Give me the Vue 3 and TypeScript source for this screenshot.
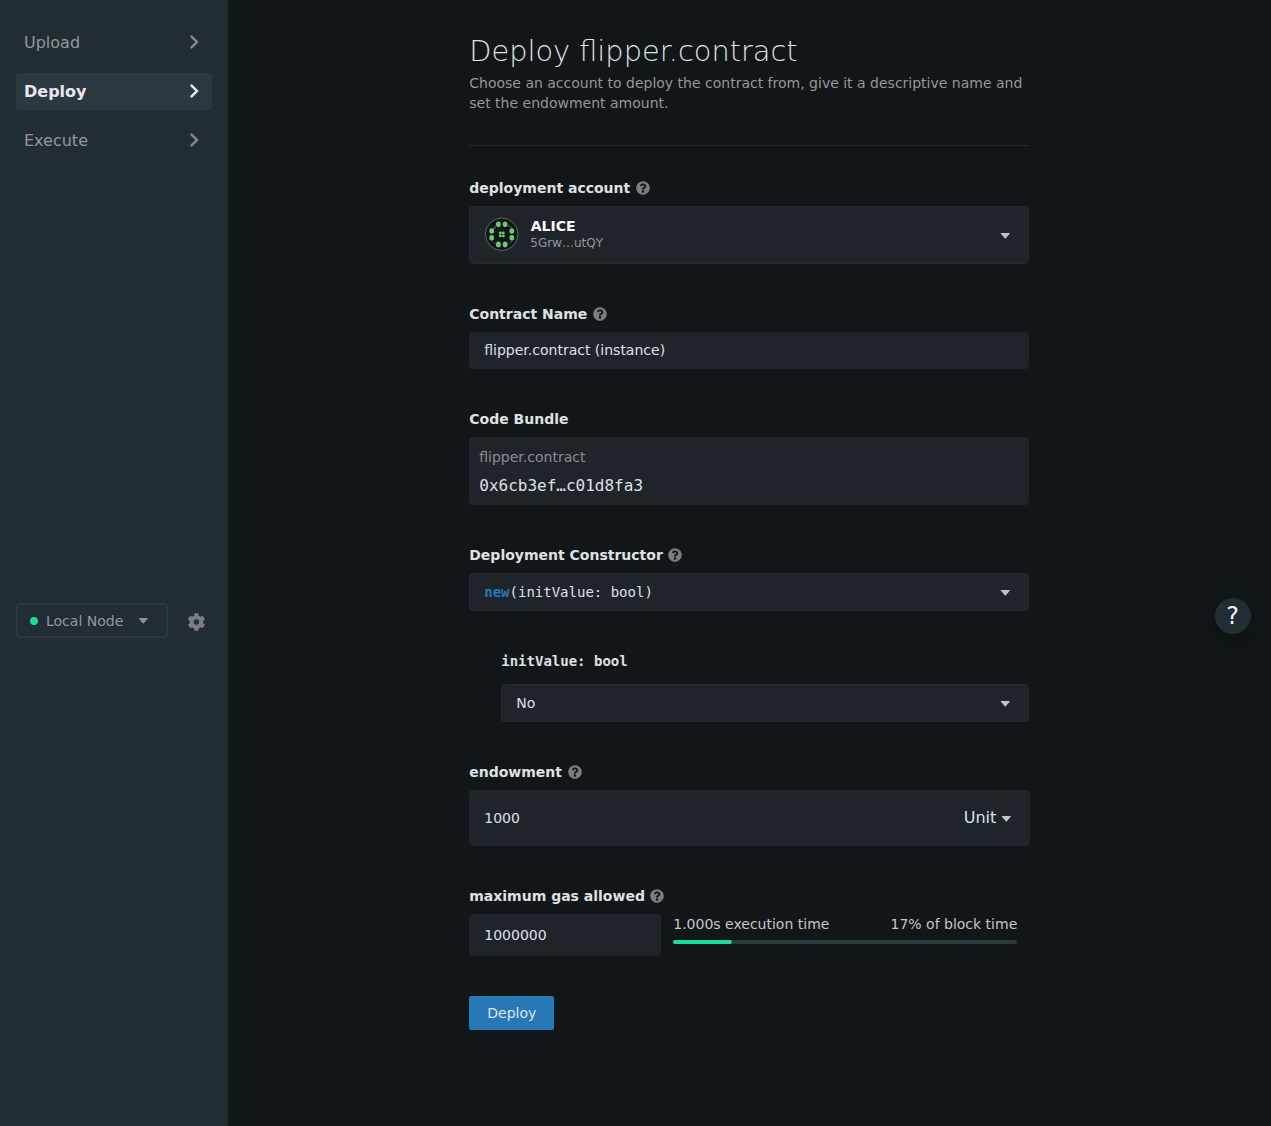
<script setup lang="ts">
const steps: { label: string; active: boolean }[] = [
  { label: 'Upload', active: false },
  { label: 'Deploy', active: true },
  { label: 'Execute', active: false },
]

const gasPercent = 17

const outerDots: [number, number][] = [
  [13.7, 7], [20.4, 7], [27.1, 13.7], [27.1, 20.4],
  [20.4, 27.1], [13.7, 27.1], [7, 20.4], [7, 13.7],
]
const innerDots: [number, number][] = [
  [15.6, 15.6], [18.6, 15.6], [15.6, 18.6], [18.6, 18.6],
]

const caretPath = 'M.7 .5Q.7 0 1.2 0h8.2q.5 0 .5.5L5.8 5.2q-.5.4-1 0z'
const helpPath =
  'M504 256c0 136.997-111.043 248-248 248S8 392.997 8 256C8 119.083 119.043 8 256 8s248 111.083 248 248zM262.655 90c-54.497 0-89.255 22.957-116.549 63.758-3.536 5.286-2.353 12.415 2.715 16.258l34.699 26.31c5.205 3.947 12.621 3.008 16.665-2.122 17.864-22.658 30.113-35.797 57.303-35.797 20.429 0 45.698 13.148 45.698 32.958 0 14.976-12.363 22.667-32.534 33.976C247.128 238.528 216 254.941 216 296v4c0 6.627 5.373 12 12 12h56c6.627 0 12-5.373 12-12v-1.333c0-28.462 83.186-29.647 83.186-106.667 0-58.002-60.165-102-116.531-102zM256 338c-25.365 0-46 20.635-46 46 0 25.364 20.635 46 46 46s46-20.636 46-46c0-25.365-20.635-46-46-46z'
const chevronPath =
  'M285.476 272.971L91.132 467.314c-9.373 9.373-24.569 9.373-33.941 0l-22.667-22.667c-9.357-9.357-9.375-24.522-.04-33.901L188.505 256 34.484 101.255c-9.335-9.379-9.317-24.544.04-33.901l22.667-22.667c9.373-9.373 24.569-9.373 33.941 0L285.475 239.03c9.373 9.372 9.373 24.568.001 33.941z'
const cogPath =
  'M487.4 315.7l-42.6-24.6c4.3-23.2 4.3-47 0-70.2l42.6-24.6c4.9-2.8 7.1-8.6 5.5-14-11.1-35.6-30-67.8-54.7-94.6-3.8-4.1-10-5.1-14.8-2.3L380.8 110c-17.9-15.4-38.5-27.3-60.8-35.1V25.8c0-5.6-3.9-10.5-9.4-11.7-36.7-8.2-74.3-7.8-109.2 0-5.5 1.2-9.4 6.1-9.4 11.7V75c-22.2 7.9-42.8 19.8-60.8 35.1L88.7 85.5c-4.9-2.8-11-1.9-14.8 2.3-24.7 26.7-43.6 58.9-54.7 94.6-1.7 5.4.6 11.2 5.5 14L67.3 221c-4.3 23.2-4.3 47 0 70.2l-42.6 24.6c-4.9 2.8-7.1 8.6-5.5 14 11.1 35.6 30 67.8 54.7 94.6 3.8 4.1 10 5.1 14.8 2.3l42.6-24.6c17.9 15.4 38.5 27.3 60.8 35.1v49.2c0 5.6 3.9 10.5 9.4 11.7 36.7 8.2 74.3 7.8 109.2 0 5.5-1.2 9.4-6.1 9.4-11.7v-49.2c22.2-7.9 42.8-19.8 60.8-35.1l42.6 24.6c4.9 2.8 11 1.9 14.8-2.3 24.7-26.7 43.6-58.9 54.7-94.6 1.5-5.5-.7-11.3-5.6-14.1zM256 336c-44.1 0-80-35.9-80-80s35.9-80 80-80 80 35.9 80 80-35.9 80-80 80z'
</script>

<template>
  <div class="app">
    <aside class="sidebar">
      <nav class="nav">
        <a v-for="step in steps" :key="step.label" class="nav-item" :class="{ active: step.active }">
          <span>{{ step.label }}</span>
          <svg class="chevron" viewBox="0 0 320 512"><path :d="chevronPath" /></svg>
        </a>
      </nav>
      <div class="network">
        <div class="node-select">
          <span class="status"></span>
          <span class="node-name">Local Node</span>
          <svg class="caret" viewBox="0 0 10 6"><path :d="caretPath" /></svg>
        </div>
        <svg class="cog" viewBox="0 0 512 512"><path :d="cogPath" /></svg>
      </div>
    </aside>

    <main class="main">
      <header class="header">
        <h1>Deploy flipper.contract</h1>
        <p>Choose an account to deploy the contract from, give it a descriptive name and set the endowment amount.</p>
      </header>

      <section class="group account">
        <label>deployment account<svg class="help" viewBox="0 0 512 512"><path :d="helpPath" /></svg></label>
        <div class="field bordered">
          <svg class="identicon" viewBox="0 0 34 34">
            <circle class="ring" cx="16.7" cy="17.3" r="16.3" />
            <g transform="translate(-0.3 0.3)">
              <path class="shade" d="M9.2 9.2l2-2.2v4.6h-4zM23.2 7l4.4 3.3v1.2l-4.4-2.2zM7.2 24l4 1.6v1.7zM27 22.7v2.6l-3.6 1.2z" />
              <ellipse v-for="(dot, i) in outerDots" :key="'o' + i" :cx="dot[0]" :cy="dot[1]" rx="2.4" ry="2.8" />
              <circle v-for="(dot, i) in innerDots" :key="'i' + i" :cx="dot[0]" :cy="dot[1]" r="1.45" />
            </g>
          </svg>
          <div class="identity">
            <strong>ALICE</strong>
            <span>5Grw…utQY</span>
          </div>
          <svg class="caret" viewBox="0 0 10 6"><path :d="caretPath" /></svg>
        </div>
      </section>

      <section class="group name">
        <label>Contract Name<svg class="help" viewBox="0 0 512 512"><path :d="helpPath" /></svg></label>
        <div class="field">flipper.contract (instance)</div>
      </section>

      <section class="group bundle">
        <label>Code Bundle</label>
        <div class="field">
          <span class="bundle-name">flipper.contract</span>
          <span class="bundle-hash">0x6cb3ef…c01d8fa3</span>
        </div>
      </section>

      <section class="group constructor">
        <label>Deployment Constructor<svg class="help" viewBox="0 0 512 512"><path :d="helpPath" /></svg></label>
        <div class="field bordered mono">
          <span><b>new</b>(initValue: bool)</span>
          <svg class="caret" viewBox="0 0 10 6"><path :d="caretPath" /></svg>
        </div>
      </section>

      <section class="group param">
        <label class="mono">initValue: bool</label>
        <div class="field bordered">
          <span>No</span>
          <svg class="caret" viewBox="0 0 10 6"><path :d="caretPath" /></svg>
        </div>
      </section>

      <section class="group endowment">
        <label>endowment<svg class="help" viewBox="0 0 512 512"><path :d="helpPath" /></svg></label>
        <div class="field">
          <span>1000</span>
          <span class="unit">Unit<svg class="caret" viewBox="0 0 10 6"><path :d="caretPath" /></svg></span>
        </div>
      </section>

      <section class="group gas">
        <label>maximum gas allowed<svg class="help" viewBox="0 0 512 512"><path :d="helpPath" /></svg></label>
        <div class="gas-row">
          <div class="field">1000000</div>
          <div class="usage">
            <div class="usage-text"><span>1.000s execution time</span><span>{{ gasPercent }}% of block time</span></div>
            <div class="track"><div class="fill" :style="{ width: gasPercent + '%' }"></div></div>
          </div>
        </div>
      </section>

      <button class="deploy" type="button">Deploy</button>
    </main>

    <div class="support">?</div>
  </div>
</template>

<style>
body {
  background: #111619;
}
</style>

<style scoped>
* {
  box-sizing: border-box;
}
.app {
  display: flex;
  height: 1126px;
  overflow: hidden;
  background: #111619;
  color: #dfe1e4;
  font-family: "DejaVu Sans", sans-serif;
  font-size: 14px;
  line-height: 20px;
}
svg {
  display: block;
  flex: none;
  fill: currentColor;
}
.sidebar {
  flex: none;
  width: 228px;
  padding: 24px 16px;
  background: #222c33;
  color: #969799;
}
.nav {
  display: flex;
  flex-direction: column;
  gap: 12px;
}
.nav-item {
  display: flex;
  align-items: center;
  justify-content: space-between;
  height: 37px;
  padding: 0 13px 0 8px;
  border-radius: 4px;
  font-size: 16px;
}
.nav-item.active {
  background: #2c383f;
  color: #e7e8ec;
  font-weight: bold;
}
.chevron {
  width: 10px;
  height: 16px;
  margin-bottom: 1.5px;
  opacity: 0.85;
}
.chevron path {
  transform: translateX(12px);
}
.active .chevron {
  opacity: 1;
}
.network {
  display: flex;
  align-items: center;
  gap: 19px;
  margin-top: 444px;
}
.node-select {
  display: flex;
  align-items: center;
  width: 152px;
  height: 35px;
  padding: 0 18px 0 12px;
  border: 2px solid #2c383f;
  border-radius: 4px;
}
.status {
  width: 8px;
  height: 8px;
  border-radius: 50%;
  background: #19dc9b;
}
.node-name {
  margin-left: 8px;
}
.caret {
  width: 10px;
  height: 6px;
  margin: 1px 0 0 auto;
  color: #c1c3c6;
}
.node-select .caret {
  color: #8f9094;
}
.cog {
  width: 18px;
  height: 18px;
  margin-top: 3px;
  color: #7b7d82;
}
.cog path {
  transform: translateX(12px);
}
.main {
  width: 560px;
  margin-left: 241.25px;
}
.header {
  height: 146px;
  padding-top: 33px;
  border-bottom: 1px solid #20272c;
}
h1 {
  margin: 0;
  font-size: 28.8px;
  font-weight: 200;
  line-height: 37px;
}
p {
  margin: 3px 0 0;
  color: #969799;
}
label {
  display: flex;
  align-items: center;
  height: 20px;
  font-weight: bold;
}
.help {
  width: 14px;
  height: 14px;
  margin-left: 5.5px;
  color: #7b7d82;
}
.field {
  display: flex;
  align-items: center;
  padding: 0 15px;
  border-radius: 4px;
  background: #1e2429;
}
.bordered {
  padding: 0 18px 0 14px;
  border: 1px solid #212b30;
}
.mono {
  font-family: "DejaVu Sans Mono", monospace;
}
.account {
  padding-top: 32px;
}
.account .field {
  height: 58px;
  margin-top: 8px;
}
.identicon {
  width: 34px;
  height: 34px;
  margin: -2px 0 0 0.5px;
  fill: #67cc6d;
}
.ring {
  fill: #111619;
  stroke: #737577;
  stroke-width: 0.8;
}
.shade {
  fill: #3f4044;
}
.identity {
  display: flex;
  flex-direction: column;
  margin: -3px 0 0 12px;
}
.identity strong {
  color: #fff;
  line-height: 18px;
}
.identity span {
  margin-left: -0.5px;
  color: #969799;
  font-size: 12px;
  line-height: 16px;
}
.name {
  padding-top: 40px;
}
.name .field {
  height: 37px;
  margin-top: 8px;
  padding-bottom: 1px;
}
.bundle {
  padding-top: 40px;
}
.bundle .field {
  flex-direction: column;
  align-items: flex-start;
  height: 68px;
  margin-top: 8px;
  padding: 10px;
}
.bundle-name {
  color: #8c8d90;
}
.bundle-hash {
  margin-top: 9px;
  font-family: "DejaVu Sans Mono", monospace;
  font-size: 16px;
}
.constructor {
  padding-top: 40px;
}
.constructor .field {
  height: 38px;
  margin-top: 8px;
}
b {
  color: #2678b6;
}
.param {
  padding: 40px 0 0 32px;
}
.param .field {
  height: 38px;
  margin-top: 13px;
}
.endowment {
  padding-top: 40px;
}
.endowment .field {
  width: 561px;
  height: 56px;
  margin-top: 8px;
  justify-content: space-between;
  padding-right: 19px;
}
.unit {
  display: flex;
  align-items: center;
  font-size: 16px;
}
.unit .caret {
  margin: 1px 0 0 5px;
}
.gas {
  padding-top: 40px;
}
.gas-row {
  display: flex;
  margin-top: 8px;
}
.gas-row .field {
  width: 192px;
  height: 42px;
}
.usage {
  width: 344px;
  margin-left: 12px;
  color: #c4c6c8;
}
.usage-text {
  display: flex;
  justify-content: space-between;
}
.track {
  height: 4px;
  margin-top: 6px;
  border-radius: 2px;
  background: #2c383f;
}
.fill {
  height: 4px;
  border-radius: 2px;
  background: #19dc9b;
}
.deploy {
  display: block;
  width: 85px;
  height: 34px;
  margin-top: 40px;
  padding: 0;
  border: 0;
  border-radius: 2px;
  background: #2678b6;
  color: #dfe6ec;
  font: inherit;
}
.support {
  position: absolute;
  top: 598px;
  left: 1215px;
  width: 36px;
  height: 36px;
  padding-right: 1px;
  border-radius: 50%;
  background: #222c33;
  box-shadow: 0 8px 24px rgba(0, 0, 0, 0.25);
  color: #f0f1f4;
  font-size: 24px;
  line-height: 37px;
  text-align: center;
}
</style>
